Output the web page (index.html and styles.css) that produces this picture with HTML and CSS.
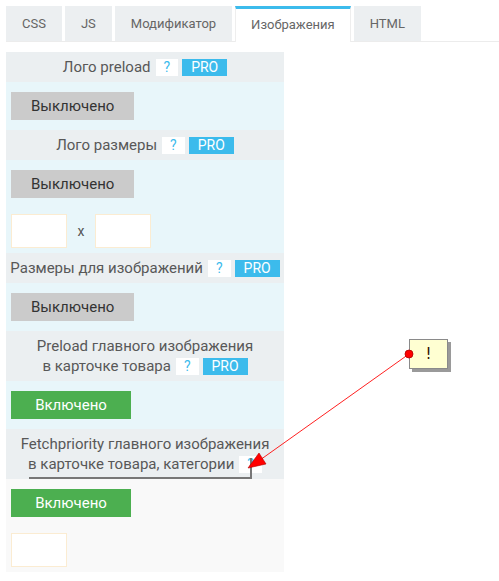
FILE: index.html
```html
<!DOCTYPE html>
<html lang="ru">
<head>
<meta charset="utf-8">
<link rel="stylesheet" href="styles.css">
</head>
<body>
<div class="page">
  <div class="tabs">
    <div class="tab">CSS</div>
    <div class="tab">JS</div>
    <div class="tab">Модификатор</div>
    <div class="tab active">Изображения</div>
    <div class="tab">HTML</div>
  </div>

  <div class="panel">
    <div class="head">Лого preload<span class="q">?</span><span class="pro">PRO</span></div>
    <div class="body">
      <div class="btn off">Выключено</div>
    </div>

    <div class="head">Лого размеры<span class="q">?</span><span class="pro">PRO</span></div>
    <div class="body tall">
      <div class="btn off">Выключено</div>
      <div class="sizes">
        <div class="inp"></div>
        <span class="x">x</span>
        <div class="inp"></div>
      </div>
    </div>

    <div class="head">Размеры для изображений<span class="q">?</span><span class="pro">PRO</span></div>
    <div class="body">
      <div class="btn off">Выключено</div>
    </div>

    <div class="head">Preload главного изображения<br>в карточке товара<span class="q">?</span><span class="pro">PRO</span></div>
    <div class="body">
      <div class="btn on">Включено</div>
    </div>

    <div class="head">Fetchpriority главного изображения<br>в карточке товара, категории<span class="q">?</span></div>
    <div class="body tall grey">
      <div class="btn on">Включено</div>
      <div class="sizes">
        <div class="inp"></div>
      </div>
    </div>
  </div>

  <div class="hl"></div>
  <div class="note">!</div>
  <svg class="arrow" width="499" height="581" viewBox="0 0 499 581">
    <line x1="409" y1="354" x2="260" y2="460" stroke="#ff2020" stroke-width="1"/>
    <polygon points="248,468 259,453 266,464" fill="#ff0000" stroke="#b00000" stroke-width="0.6"/>
    <circle cx="409" cy="354" r="4" fill="#ff0000" stroke="#b00000" stroke-width="0.8"/>
  </svg>
</div>
</body>
</html>
```

FILE: styles.css
```css
* { box-sizing: border-box; }
html, body { margin: 0; padding: 0; background: #fff; }
body {
  font-family: Roboto, "Liberation Sans", sans-serif;
  color: #555;
}
.page {
  position: relative;
  width: 499px;
  height: 581px;
  padding: 6px;
}
.tabs {
  display: flex;
  gap: 3px;
  border-bottom: 1px solid #ececec;
  margin-right: -6px;
}
.tab {
  height: 35px;
  line-height: 35px;
  padding: 0 16px;
  font-size: 13px;
  color: #666;
  background: #eceff1;
}
.tab.active {
  background: #fff;
  border-top: 3px solid #3cbbec;
  border-left: 1px solid #eee;
  border-right: 1px solid #eee;
  padding: 0 15px;
  line-height: 31px;
  margin-bottom: -1px;
  height: 36px;
}
.panel {
  margin-top: 10px;
  width: 278px;
}
.head {
  background: #ebeff1;
  text-align: center;
  font-size: 15px;
  line-height: 20px;
  padding: 5px 1px;
  color: #585858;
}
.q, .pro {
  display: inline-block;
  vertical-align: top;
  margin-top: 2px;
  height: 17px;
  line-height: 17px;
  font-size: 14px;
}
.q {
  background: #fff;
  color: #3cbbec;
  padding: 0 8px;
  margin-left: 5px;
}
.pro {
  background: #3cbbec;
  color: #fff;
  padding: 0 9px;
  margin-left: 4px;
}
.body {
  background: #e8f6fa;
  padding: 10px 5px;
}
.body.tall { padding-bottom: 5px; }
.body.grey { background: #f9f9f9; }
.btn {
  display: inline-block;
  min-width: 120px;
  height: 28px;
  line-height: 28px;
  padding: 0 20px;
  text-align: center;
  font-size: 15px;
}
.btn.off { background: #cbcbcb; color: #333; }
.btn.on { background: #4caf50; color: #fff; }
.sizes {
  display: flex;
  align-items: center;
  margin-top: 16px;
}
.inp {
  width: 56px;
  height: 34px;
  background: #fff;
  border: 1px solid #fbecd2;
}
.x {
  width: 28px;
  text-align: center;
  font-size: 14px;
  color: #555;
}
.hl {
  position: absolute;
  left: 27px;
  top: 456px;
  width: 223px;
  height: 21px;
  box-shadow: 2px 2px 0 #777;
}
.note {
  position: absolute;
  left: 409px;
  top: 339px;
  width: 39px;
  height: 30px;
  background: #ffffd2;
  border: 1px solid #8a8a8a;
  box-shadow: 3px 3px 0 #9a9a9a;
  text-align: center;
  line-height: 28px;
  font-family: "DejaVu Sans", sans-serif;
  font-size: 15px;
  color: #331100;
}
.arrow {
  position: absolute;
  left: 0;
  top: 0;
}
```
